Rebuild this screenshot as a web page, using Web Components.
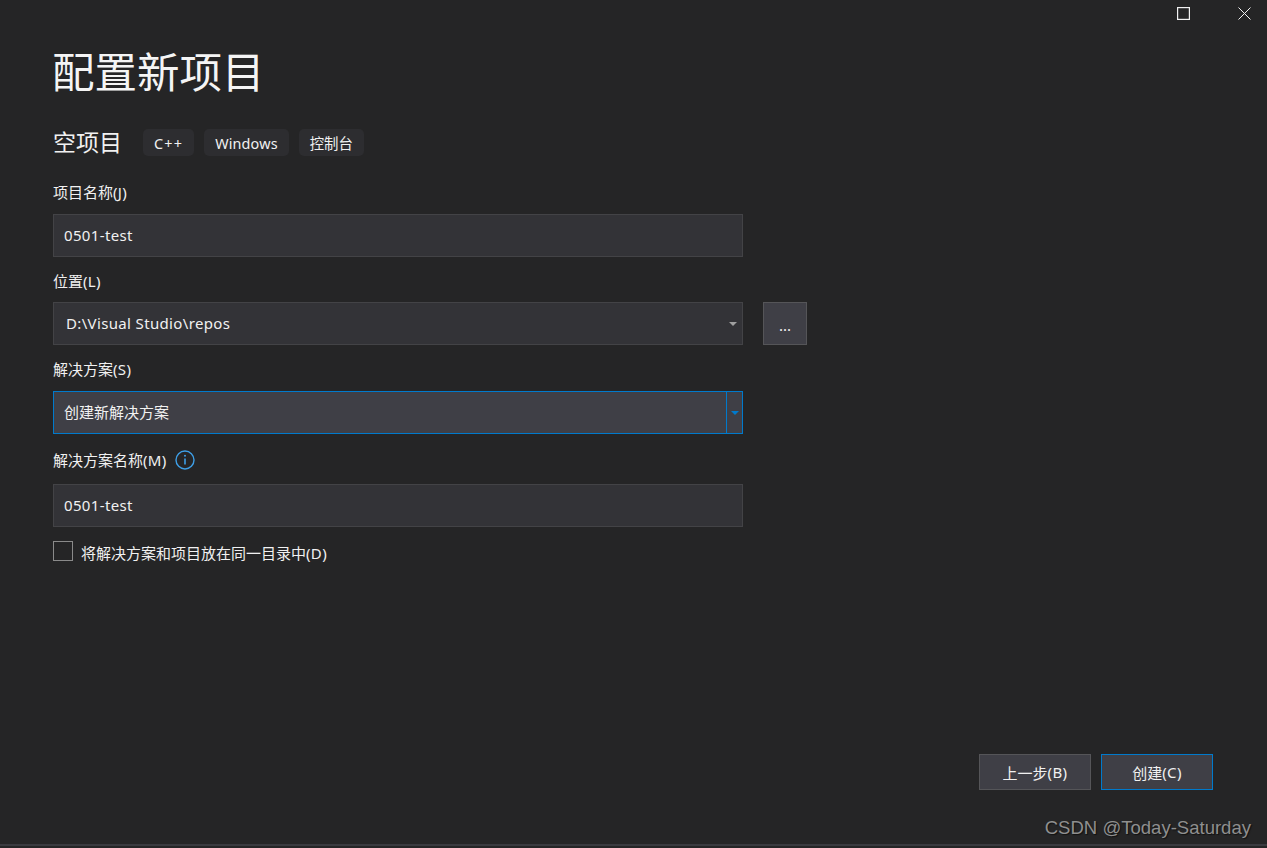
<!DOCTYPE html>
<html lang="zh">
<head>
<meta charset="utf-8">
<title>配置新项目</title>
<style>
    html, body { margin: 0; height: 100%; overflow: hidden; background: #252526; }
    body {
        color: #f1f1f1;
        font-family: "Noto Sans", "Noto Sans CJK SC", sans-serif;
        font-size: 15px;
    }
    .latin { letter-spacing: 0.35px; }
</style>
</head>
<body>
<vs-window>
    <vs-project-header slot="header" title-text="配置新项目" project="空项目">
        <vs-tag style="letter-spacing: 1.2px">C++</vs-tag>
        <vs-tag style="letter-spacing: 0.15px">Windows</vs-tag>
        <vs-tag>控制台</vs-tag>
    </vs-project-header>

    <vs-field label="项目名称(J)" style="--top: 26px; --gap: 12px">
        <vs-input value="0501-test"></vs-input>
    </vs-field>
    <vs-field label="位置(L)" style="--top: 14px; --gap: 11px">
        <div style="display: flex; gap: 20px; width: 754px">
            <vs-combo value="D:\Visual Studio\repos" inset="12"></vs-combo>
            <vs-button kind="browse">...</vs-button>
        </div>
    </vs-field>
    <vs-field label="解决方案(S)" style="--top: 14px; --gap: 12px">
        <vs-combo value="创建新解决方案" focused></vs-combo>
    </vs-field>
    <vs-field label="解决方案名称(M)" info style="--top: 16px; --gap: 14px">
        <vs-input value="0501-test"></vs-input>
    </vs-field>
    <vs-checkbox style="margin-top: 14px">将解决方案和项目放在同一目录中<span class="latin">(D)</span></vs-checkbox>

    <vs-button slot="footer">上一步<span class="latin">(B)</span></vs-button>
    <vs-button slot="footer" primary>创建<span class="latin">(C)</span></vs-button>
</vs-window>

<script>
// latin runs are set slightly wider so they keep the width of the original UI font
function spacedText(text) {
    return text.replace(/[\x21-\x7e ]+/g, run => `<span style="letter-spacing: 0.35px">${run}</span>`);
}

customElements.define("vs-window", class extends HTMLElement {
    constructor() {
        super();
        this.attachShadow({ mode: "open" });
        this.shadowRoot.innerHTML = `
            <style>
                :host {
                    display: flex;
                    flex-direction: column;
                    position: relative;
                    height: 848px;
                    overflow: hidden;
                }
                #controls {
                    display: flex;
                    justify-content: flex-end;
                    gap: 48px;
                    height: 30px;
                    padding: 7px 16px 0 0;
                    box-sizing: border-box;
                }
                #controls svg { display: block; }
                #content {
                    flex: 1;
                    display: flex;
                    flex-direction: column;
                    padding-left: 53px;
                    width: 690px;
                }
                #footer {
                    display: flex;
                    justify-content: flex-end;
                    gap: 10px;
                    padding-right: 54px;
                    margin-bottom: 54px;
                }
                #statusline { height: 2px; background: #3a3a3f; }
                #cutoff {
                    height: 2px;
                    overflow: hidden;
                    padding-left: 16px;
                    font-size: 14px;
                    line-height: 18px;
                    white-space: nowrap;
                    color: #e0e0e0;
                }
                #watermark {
                    position: absolute;
                    right: 16px;
                    top: 817px;
                    font: 18.55px/22px "Liberation Sans", sans-serif;
                    color: #8f8f8f;
                    text-shadow: 1px 1px 1px #111;
                }
            </style>
            <div id="controls">
                <svg width="13" height="13" viewBox="0 0 13 13" fill="none" stroke="#f1f1f1" stroke-width="1.200">
                    <rect x=".6" y=".6" width="11.800" height="11.800"/>
                </svg>
                <svg width="13" height="13" viewBox="0 0 13 13" fill="none" stroke="#f1f1f1">
                    <path d="M.5.5l12 12M12.500.5l-12 12"/>
                </svg>
            </div>
            <div id="content">
                <slot name="header"></slot>
                <slot></slot>
            </div>
            <div id="footer"><slot name="footer"></slot></div>
            <div id="statusline"></div>
            <div id="cutoff">输出: 将调用堆栈窗口</div>
            <div id="watermark">CSDN @Today-Saturday</div>
        `;
    }
});

customElements.define("vs-project-header", class extends HTMLElement {
    constructor() {
        super();
        this.attachShadow({ mode: "open" });
        this.shadowRoot.innerHTML = `
            <style>
                :host { display: block; padding-top: 18px; }
                h1 {
                    margin: 0 0 0 -1px;
                    font-size: 42.500px;
                    line-height: 48px;
                    font-weight: 400;
                    color: #f5f5f5;
                }
                #row {
                    display: flex;
                    align-items: center;
                    gap: 10px;
                    margin-top: 33px;
                    height: 27px;
                }
                #project {
                    font-size: 23px;
                    line-height: 27px;
                    margin-right: 11px;
                }
            </style>
            <h1></h1>
            <div id="row">
                <span id="project"></span>
                <slot></slot>
            </div>
        `;
        this.shadowRoot.querySelector("h1").textContent = this.getAttribute("title-text");
        this.shadowRoot.querySelector("#project").textContent = this.getAttribute("project");
    }
});

customElements.define("vs-tag", class extends HTMLElement {
    constructor() {
        super();
        this.attachShadow({ mode: "open" });
        this.shadowRoot.innerHTML = `
            <style>
                :host {
                    display: block;
                    height: 27px;
                    line-height: 29px;
                    padding: 0 11px;
                    background: #2d2d30;
                    border-radius: 5px;
                    font-size: 14.400px;
                }
            </style>
            <slot></slot>
        `;
    }
});

customElements.define("vs-field", class extends HTMLElement {
    constructor() {
        super();
        this.attachShadow({ mode: "open" });
        this.shadowRoot.innerHTML = `
            <style>
                :host { display: block; margin-top: var(--top, 14px); }
                #label {
                    display: flex;
                    align-items: center;
                    gap: 8px;
                    height: 20px;
                    line-height: 20px;
                    margin-bottom: var(--gap, 12px);
                    font-size: 15px;
                    color: #f1f1f1;
                }
                svg { display: block; }
            </style>
            <div id="label"><span id="text"></span></div>
            <slot></slot>
        `;
        this.shadowRoot.querySelector("#text").innerHTML = spacedText(this.getAttribute("label"));
        if (this.hasAttribute("info")) {
            this.shadowRoot.querySelector("#label").insertAdjacentHTML("beforeend", `
                <svg width="20" height="20" viewBox="0 0 20 20" fill="none">
                    <circle cx="10" cy="10" r="9" stroke="#3e9fe6" stroke-width="1.400"/>
                    <path d="M10 8.500v6" stroke="#3e9fe6" stroke-width="1.600"/>
                    <circle cx="10" cy="5.800" r="1" fill="#3e9fe6"/>
                </svg>
            `);
        }
    }
});

customElements.define("vs-input", class extends HTMLElement {
    constructor() {
        super();
        this.attachShadow({ mode: "open" });
        this.shadowRoot.innerHTML = `
            <style>
                :host {
                    display: block;
                    height: 43px;
                    box-sizing: border-box;
                    padding-left: 10px;
                    line-height: 41px;
                    font-size: 15px;
                    background: #333337;
                    border: 1px solid #434346;
                }
            </style>
            <span id="value"></span>
        `;
        this.shadowRoot.querySelector("#value").innerHTML = spacedText(this.getAttribute("value"));
    }
});

customElements.define("vs-combo", class extends HTMLElement {
    constructor() {
        super();
        this.attachShadow({ mode: "open" });
        this.shadowRoot.innerHTML = `
            <style>
                :host {
                    display: flex;
                    flex: 1;
                    height: 43px;
                    box-sizing: border-box;
                    line-height: 41px;
                    font-size: 15px;
                    background: #333337;
                    border: 1px solid #434346;
                }
                :host([focused]) { background: #3f3f46; border-color: #007acc; }
                #value { flex: 1; }
                #arrow {
                    width: 16px;
                    display: flex;
                    align-items: center;
                    justify-content: center;
                    padding-right: 3px;
                    box-sizing: border-box;
                }
                :host([focused]) #arrow { border-left: 1px solid #007acc; padding-right: 0; }
                svg { display: block; fill: #a0a0a0; }
                :host([focused]) svg { fill: #007acc; }
            </style>
            <span id="value"></span>
            <div id="arrow">
                <svg width="8" height="4" viewBox="0 0 8 4"><path d="M0 0h8L4 4z"/></svg>
            </div>
        `;
        let value = this.shadowRoot.querySelector("#value");
        value.innerHTML = spacedText(this.getAttribute("value"));
        value.style.paddingLeft = `${this.getAttribute("inset") || 10}px`;
    }
});

customElements.define("vs-button", class extends HTMLElement {
    constructor() {
        super();
        this.attachShadow({ mode: "open" });
        this.shadowRoot.innerHTML = `
            <style>
                :host {
                    display: flex;
                    align-items: center;
                    justify-content: center;
                    width: 112px;
                    height: 36px;
                    box-sizing: border-box;
                    font-size: 15px;
                    background: #3f3f46;
                    border: 1px solid #555558;
                }
                :host([primary]) { border-color: #007acc; }
                :host([kind="browse"]) { width: 44px; height: 43px; flex: none; padding-top: 2px; }
            </style>
            <slot></slot>
        `;
    }
});

customElements.define("vs-checkbox", class extends HTMLElement {
    constructor() {
        super();
        this.attachShadow({ mode: "open" });
        this.shadowRoot.innerHTML = `
            <style>
                :host {
                    display: flex;
                    align-items: center;
                    gap: 8px;
                    height: 20px;
                    line-height: 20px;
                    font-size: 15px;
                    color: #f1f1f1;
                    white-space: nowrap;
                }
                #box {
                    width: 20px;
                    height: 20px;
                    box-sizing: border-box;
                    border: 1px solid #8a8a8a;
                }
                span { margin-top: 4px; }
            </style>
            <div id="box"></div>
            <span><slot></slot></span>
        `;
    }
});
</script>
</body>
</html>
